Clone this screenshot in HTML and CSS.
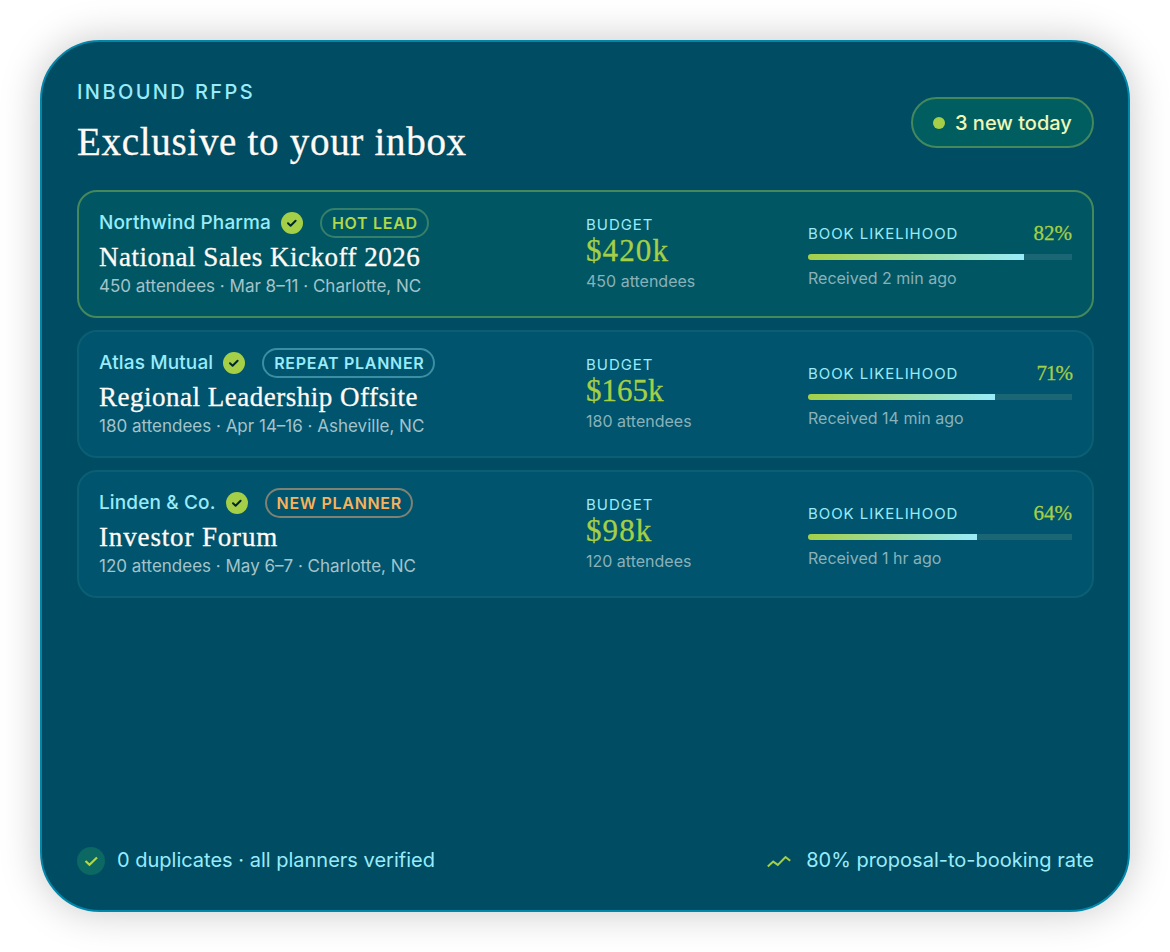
FILE: index.html
```html
<!DOCTYPE html>
<html lang="en">

<head>
    <meta charset="UTF-8">
    <meta name="viewport" content="width=device-width, initial-scale=1.0">
    <title>Inbound RFPs</title>
    <link rel="stylesheet" href="styles.css">
</head>

<body>
    <main class="panel">
        <header class="header">
            <div>
                <div class="eyebrow">INBOUND RFPS</div>
                <h1>Exclusive to your inbox</h1>
            </div>
            <div class="new-today"><span class="dot"></span>3 new today</div>
        </header>

        <section class="list">
            <article class="rfp hot">
                <div class="info">
                    <div class="who">
                        <span class="company">Northwind Pharma</span>
                        <svg class="verified" viewBox="0 0 22 22"><circle cx="11" cy="11" r="11"/><path d="M7 11.3l2.6 2.4 5-4.900"/></svg>
                        <span class="tag tag-hot">HOT LEAD</span>
                    </div>
                    <h2>National Sales Kickoff 2026</h2>
                    <p class="meta">450 attendees · Mar 8–11 · Charlotte, NC</p>
                </div>
                <div class="budget">
                    <div class="label">BUDGET</div>
                    <div class="amount wide">$420k</div>
                    <div class="small">450 attendees</div>
                </div>
                <div class="likelihood">
                    <div class="score"><span class="label">BOOK LIKELIHOOD</span><span class="percent">82%</span></div>
                    <div class="bar"><div class="fill" style="width:82%"></div></div>
                    <div class="small">Received 2 min ago</div>
                </div>
            </article>

            <article class="rfp">
                <div class="info">
                    <div class="who">
                        <span class="company">Atlas Mutual</span>
                        <svg class="verified" viewBox="0 0 22 22"><circle cx="11" cy="11" r="11"/><path d="M7 11.3l2.6 2.4 5-4.900"/></svg>
                        <span class="tag tag-repeat">REPEAT PLANNER</span>
                    </div>
                    <h2>Regional Leadership Offsite</h2>
                    <p class="meta">180 attendees · Apr 14–16 · Asheville, NC</p>
                </div>
                <div class="budget">
                    <div class="label">BUDGET</div>
                    <div class="amount">$165k</div>
                    <div class="small">180 attendees</div>
                </div>
                <div class="likelihood">
                    <div class="score"><span class="label">BOOK LIKELIHOOD</span><span class="percent narrow">71%</span></div>
                    <div class="bar"><div class="fill" style="width:71%"></div></div>
                    <div class="small">Received 14 min ago</div>
                </div>
            </article>

            <article class="rfp">
                <div class="info">
                    <div class="who">
                        <span class="company">Linden &amp; Co.</span>
                        <svg class="verified" viewBox="0 0 22 22"><circle cx="11" cy="11" r="11"/><path d="M7 11.3l2.6 2.4 5-4.900"/></svg>
                        <span class="tag tag-new">NEW PLANNER</span>
                    </div>
                    <h2 class="short">Investor Forum</h2>
                    <p class="meta">120 attendees · May 6–7 · Charlotte, NC</p>
                </div>
                <div class="budget">
                    <div class="label">BUDGET</div>
                    <div class="amount wide">$98k</div>
                    <div class="small">120 attendees</div>
                </div>
                <div class="likelihood">
                    <div class="score"><span class="label">BOOK LIKELIHOOD</span><span class="percent">64%</span></div>
                    <div class="bar"><div class="fill" style="width:64%"></div></div>
                    <div class="small">Received 1 hr ago</div>
                </div>
            </article>
        </section>

        <footer class="footer">
            <div class="stat">
                <svg class="check" viewBox="0 0 28 28"><circle cx="14" cy="14" r="14"/><path d="M8.500 14l4 3.800 7.500-7.300"/></svg>
                <span>0 duplicates · all planners verified</span>
            </div>
            <div class="stat rate">
                <svg class="trend" viewBox="0 0 24 14"><path d="M.8 12.500L6.200 7.600l4.600 3.300L18.500 3l4.700 3.800"/></svg>
                <span>80% proposal-to-booking rate</span>
            </div>
        </footer>
    </main>
</body>

</html>
```
FILE: styles.css
```css
* {
    box-sizing: border-box;
    margin: 0;
    padding: 0;
}
body {
    background: #fff;
    font-family: Inter, "Liberation Sans", sans-serif;
    color: #99ebfa;
    padding: 40px;
    height: 952px;
    overflow: hidden;
}
.panel {
    display: flex;
    flex-direction: column;
    width: 1090px;
    height: 872px;
    padding: 35px 34px 35px 35px;
    background: #004c63;
    border: 2px solid #0087ab;
    border-radius: 60px;
    box-shadow: 0 0 40px rgba(0, 0, 0, 0.22);
}

/* header */
.header {
    display: flex;
    justify-content: space-between;
    align-items: center;
    height: 91px;
}
.eyebrow {
    font-size: 20px;
    line-height: 28px;
    font-weight: 500;
    letter-spacing: 2.4px;
}
h1,
h2,
.amount,
.percent {
    font-family: "Liberation Serif", serif;
    font-weight: 400;
    -webkit-text-stroke: 0.3px;
}
h1 {
    font-size: 39px;
    line-height: 46px;
    margin: 13px 0 3px;
    color: #fffaf5;
    letter-spacing: 0.7px;
    white-space: nowrap;
}
.new-today {
    display: flex;
    align-items: center;
    gap: 10px;
    width: 183px;
    height: 51px;
    padding-left: 20px;
    border: 2px solid #44885c;
    border-radius: 26px;
    background: #005e60;
    color: #eef8b8;
    font-size: 20px;
    font-weight: 500;
}
.dot {
    width: 12px;
    height: 12px;
    border-radius: 50%;
    background: #a4cf46;
}

/* rfp rows */
.list {
    display: grid;
    gap: 12px;
    margin-top: 22px;
}
.rfp {
    display: grid;
    grid-template-columns: 465px 200px 264px;
    column-gap: 22px;
    height: 128px;
    padding: 16px 20px;
    border: 2px solid #0a5f75;
    border-radius: 20px;
    background: #00546d;
}
.rfp.hot {
    border-color: #44885c;
    background: #005763;
}
.who {
    display: flex;
    align-items: center;
    height: 30px;
}
.company {
    font-size: 19px;
    font-weight: 500;
    letter-spacing: 0.13px;
    padding-bottom: 2px;
}
.verified {
    width: 22px;
    height: 22px;
    margin: 0 17px 0 10px;
}
.verified circle {
    fill: #a4cf46;
}
.verified path {
    fill: none;
    stroke: #00252e;
    stroke-width: 2;
    stroke-linecap: round;
    stroke-linejoin: round;
}
.tag {
    height: 30px;
    line-height: 26px;
    padding: 0 9px 0 10px;
    border: 2px solid;
    border-radius: 15px;
    font-size: 16px;
    font-weight: 600;
    letter-spacing: 0.7px;
}
.tag-hot {
    color: #b0d848;
    border-color: #35806a;
}
.tag-repeat {
    border-color: #3c8fa3;
}
.tag-new {
    color: #f9b25c;
    border-color: #7d8272;
}
h2 {
    color: #fffaf5;
    font-size: 27px;
    line-height: 36px;
    margin-top: 1px;
    letter-spacing: 0.5px;
    white-space: nowrap;
}
h2.short {
    letter-spacing: 0.85px;
}
.meta {
    font-size: 17px;
    line-height: 22px;
    color: #a4c3ca;
}
.budget {
    padding-top: 7px;
}
.label {
    font-size: 15px;
    line-height: 20px;
    letter-spacing: 0.95px;
}
.amount {
    font-size: 31px;
    line-height: 32px;
    color: #a4cf46;
}
.amount.wide {
    letter-spacing: 1.1px;
}
.small {
    font-size: 16px;
    line-height: 28px;
    color: #89b1b9;
}
.likelihood {
    padding-top: 14px;
}
.score {
    display: flex;
    justify-content: space-between;
    align-items: center;
    height: 24px;
}
.percent {
    font-size: 21px;
    color: #a4cf46;
    padding-bottom: 2px;
}
.percent.narrow {
    letter-spacing: -1px;
}
.bar {
    height: 6px;
    margin: 8px 0 4px;
    border-radius: 3px 0 0 3px;
    background: #1a6674;
    overflow: hidden;
}
.fill {
    height: 6px;
    background: linear-gradient(to right, #a4cf46, #99ebfa);
}

/* footer */
.footer {
    display: flex;
    justify-content: space-between;
    align-items: center;
    height: 28px;
    margin-top: auto;
    font-size: 20px;
}
.stat {
    display: flex;
    align-items: center;
    gap: 12px;
}
.stat span {
    padding-bottom: 2px;
}
.check {
    width: 28px;
    height: 28px;
}
.check circle {
    fill: #0b6862;
}
.check path {
    fill: none;
    stroke: #b0d848;
    stroke-width: 2.2;
}
.rate {
    gap: 15px;
}
.trend {
    width: 24px;
    height: 14px;
}
.trend path {
    fill: none;
    stroke: #a4cf46;
    stroke-width: 2;
}
```
